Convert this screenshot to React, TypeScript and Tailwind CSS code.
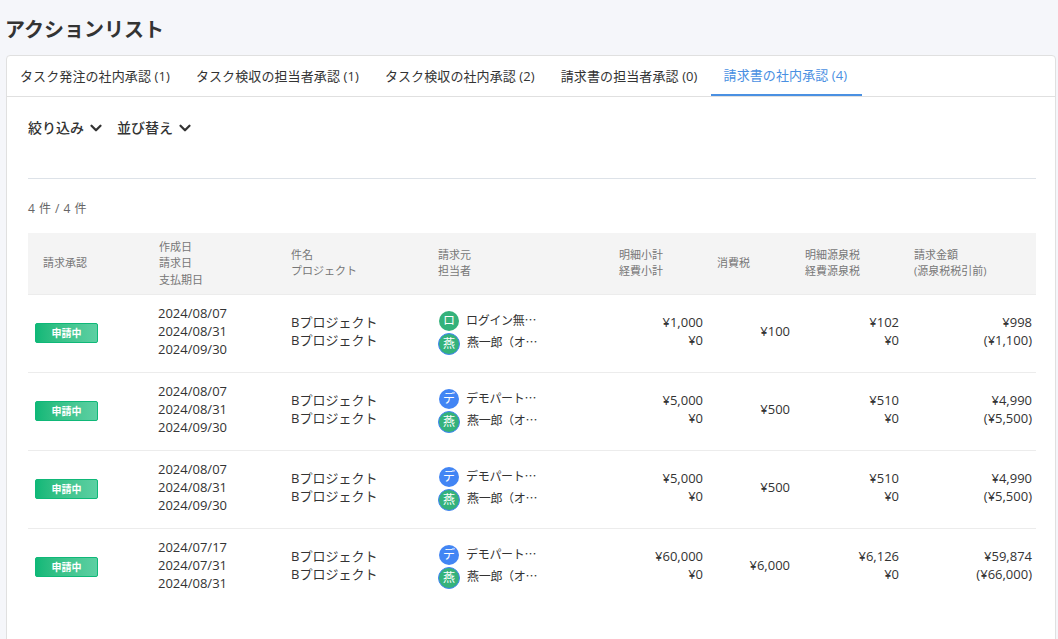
import { ChevronDown } from "lucide-react";

const font = "font-['Open_Sans','Noto_Sans_CJK_JP',sans-serif]";

const tabs = [
  "タスク発注の社内承認 (1)",
  "タスク検収の担当者承認 (1)",
  "タスク検収の社内承認 (2)",
  "請求書の担当者承認 (0)",
  "請求書の社内承認 (4)",
];

const rows = [
  { dates: ["2024/08/07", "2024/08/31", "2024/09/30"], initial: "ロ", from: "ログイン無…", blue: false, sub: "¥1,000", tax: "¥100", wh: "¥102", total: "¥998", gross: "(¥1,100)" },
  { dates: ["2024/08/07", "2024/08/31", "2024/09/30"], initial: "デ", from: "デモパート…", blue: true, sub: "¥5,000", tax: "¥500", wh: "¥510", total: "¥4,990", gross: "(¥5,500)" },
  { dates: ["2024/08/07", "2024/08/31", "2024/09/30"], initial: "デ", from: "デモパート…", blue: true, sub: "¥5,000", tax: "¥500", wh: "¥510", total: "¥4,990", gross: "(¥5,500)" },
  { dates: ["2024/07/17", "2024/07/31", "2024/08/31"], initial: "デ", from: "デモパート…", blue: true, sub: "¥60,000", tax: "¥6,000", wh: "¥6,126", total: "¥59,874", gross: "(¥66,000)" },
];

const FilterButton = ({ label }: { label: string }) => (
  <button className="flex items-center gap-[3px] text-[14px] leading-[20px] font-medium text-[#333]">
    {label}
    <ChevronDown size={18} strokeWidth={3} />
  </button>
);

const App = () => {
  return (
    <div className={`${font} h-[639px] overflow-hidden bg-[#f5f6fa] pr-[2px] pl-[6px] text-[#333]`}>
      <h1 className="-ml-px pt-[15px] pb-[11px] text-[20px] leading-[29px] font-bold">アクションリスト</h1>

      <div className="h-[600px] rounded-t-[4px] border border-[#e0e0e0] bg-white">
        <div className="flex h-[41px] border-b border-[#e0e0e0] pl-[13px] text-[13px] tracking-[0.1px]">
          {tabs.map((tab, i) => (
            <div
              key={tab}
              className={
                i === 4
                  ? "-ml-[13px] flex h-[40px] items-center border-b-[2px] border-[#4a90e2] pt-[2px] pr-[15px] pl-[13px] whitespace-nowrap text-[#4a90e2]"
                  : "mr-[26px] flex h-[40px] items-center pt-[2px] whitespace-nowrap"
              }
            >
              {tab}
            </div>
          ))}
        </div>

        <div className="pr-[19px] pl-[21px]">
          <div className="flex h-[82px] items-start gap-[12px] border-b border-[#dde2e8] pt-[21px]">
            <FilterButton label="絞り込み" />
            <FilterButton label="並び替え" />
          </div>

          <p className="pt-[21px] pb-[15px] text-[12px] leading-[18px] tracking-[0.5px] text-[#666]">4 件 / 4 件</p>

          <table className="w-[1008px] table-fixed border-collapse">
            <colgroup>
              <col className="w-[123px]" />
              <col className="w-[133px]" />
              <col className="w-[147px]" />
              <col className="w-[181px]" />
              <col className="w-[98px]" />
              <col className="w-[87px]" />
              <col className="w-[109px]" />
              <col className="w-[130px]" />
            </colgroup>
            <thead>
              <tr className="h-[61px] border-b border-[#ececec] bg-[#f4f4f4] text-left text-[11px] leading-[16.5px] font-normal text-[#777]">
                <th className="pl-[15px] font-normal">請求承認</th>
                <th className="pl-[8px] font-normal">作成日<br />請求日<br />支払期日</th>
                <th className="pl-[7px] font-normal">件名<br />プロジェクト</th>
                <th className="pl-[7px] font-normal">請求元<br />担当者</th>
                <th className="pl-[7px] font-normal">明細小計<br />経費小計</th>
                <th className="pl-[7px] font-normal">消費税</th>
                <th className="pl-[8px] font-normal">明細源泉税<br />経費源泉税</th>
                <th className="pl-[8px] font-normal">請求金額<br />(源泉税税引前)</th>
              </tr>
            </thead>
            <tbody className="text-[13px] leading-[18px]">
              {rows.map((row, i) => (
                <tr key={i} className={i < 3 ? "h-[78px] border-b border-[#ececec]" : "h-[78px]"}>
                  <td className="pl-[7px]">
                    <span className="flex h-[20px] w-[63px] items-center justify-center rounded-[2px] border border-[#0fb878] bg-gradient-to-r from-[#0fb878] to-[#5cd0a3] text-[10px] font-bold text-white">
                      申請中
                    </span>
                  </td>
                  <td className="pb-[5px] pl-[7px]">
                    {row.dates.map((d) => (
                      <div key={d}>{d}</div>
                    ))}
                  </td>
                  <td className="pb-[5px] pl-[7px]">
                    <div>Bプロジェクト</div>
                    <div>Bプロジェクト</div>
                  </td>
                  <td className="pb-[4px] pl-[7px]">
                    <div className="flex h-[22px] items-center gap-[7px] pl-px">
                      <span className={`mt-[2px] flex h-[20px] w-[20px] items-center justify-center rounded-full text-[12px] text-white ${row.blue ? "bg-[#4285f4]" : "bg-[#34b27b]"}`}>
                        {row.initial}
                      </span>
                      <span className="font-['Noto_Sans_CJK_JP',sans-serif] text-[12px] tracking-[-0.3px] whitespace-nowrap">{row.from}</span>
                    </div>
                    <div className="flex h-[22px] items-center gap-[7px]">
                      <span className="mt-[4px] flex h-[22px] w-[22px] items-center justify-center rounded-full border border-[#4285f4] bg-[#34b27b] text-[12px] text-white">
                        燕
                      </span>
                      <span className="font-['Noto_Sans_CJK_JP',sans-serif] text-[12px] tracking-[-0.3px] whitespace-nowrap">燕一郎（オ…</span>
                    </div>
                  </td>
                  <td className="pr-[7px] pb-[5px] text-right">
                    <div>{row.sub}</div>
                    <div>¥0</div>
                  </td>
                  <td className="pr-[7px] pb-[5px] text-right">{row.tax}</td>
                  <td className="pr-[7px] pb-[5px] text-right">
                    <div>{row.wh}</div>
                    <div>¥0</div>
                  </td>
                  <td className="pr-[4px] pb-[5px] text-right">
                    <div>{row.total}</div>
                    <div>{row.gross}</div>
                  </td>
                </tr>
              ))}
            </tbody>
          </table>
        </div>
      </div>
    </div>
  );
};

export default App;
